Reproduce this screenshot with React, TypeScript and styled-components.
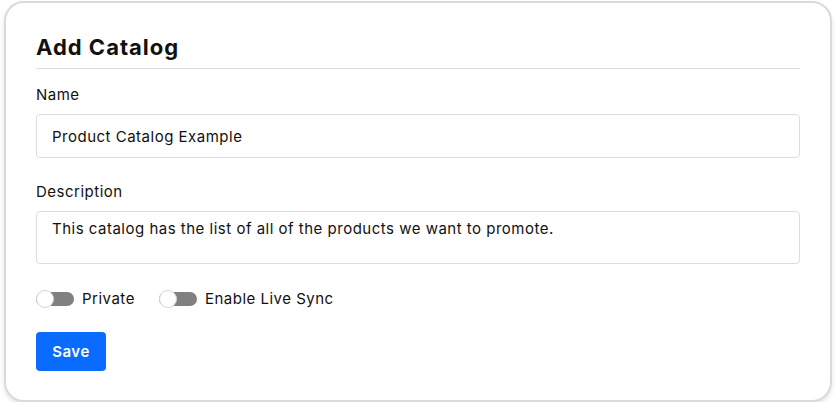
import { useState } from "react";
import styled, { createGlobalStyle } from "styled-components";

const GlobalStyle = createGlobalStyle`
  html, body {
    margin: 0;
    padding: 0;
    background: #ffffff;
  }
  body {
    padding: 1px 4px 0;
    font-family: Inter, "Liberation Sans", sans-serif;
    color: #111111;
  }
  * {
    box-sizing: border-box;
  }
`;

const Card = styled.form`
  width: 100%;
  height: 401px;
  border: 2px solid #dadada;
  border-radius: 20px;
  box-shadow: 0 3px 5px rgba(0, 0, 0, 0.1);
  padding: 30px 30px 0;
  display: flex;
  flex-direction: column;
  background: #fff;
`;

const Title = styled.h2`
  margin: 0;
  font-size: 22px;
  font-weight: 700;
  letter-spacing: 1px;
  line-height: 28px;
  padding-bottom: 7px;
  border-bottom: 1px solid #dddddd;
`;

const Field = styled.div<{ $gap: number }>`
  display: flex;
  flex-direction: column;
  margin-top: ${(p) => p.$gap}px;
`;

const Label = styled.label`
  font-size: 15px;
  letter-spacing: 0.5px;
  line-height: 20px;
  margin-bottom: 9px;
`;

const Input = styled.input`
  height: 44px;
  border: 1px solid #dddddd;
  border-radius: 4px;
  padding: 0 15px;
  font-family: inherit;
  font-size: 15px;
  letter-spacing: 0.5px;
  color: #111;
  outline: none;
`;

const TextArea = styled.textarea`
  height: 53px;
  border: 1px solid #dddddd;
  border-radius: 4px;
  padding: 7px 15px;
  font-family: inherit;
  font-size: 15px;
  letter-spacing: 0.5px;
  line-height: 20px;
  color: #111;
  resize: none;
  outline: none;
`;

const ToggleRow = styled.div`
  display: flex;
  align-items: center;
  gap: 24px;
  margin-top: 25px;
  height: 20px;
`;

const ToggleLabel = styled.label`
  display: flex;
  align-items: center;
  gap: 8px;
  font-size: 15px;
  letter-spacing: 0.5px;
  line-height: 20px;
  cursor: pointer;
`;

const Track = styled.span<{ $on: boolean }>`
  position: relative;
  width: 38px;
  height: 14px;
  border-radius: 7px;
  background: ${(p) => (p.$on ? "#0a6cff" : "#808080")};
`;

const Knob = styled.span<{ $on: boolean }>`
  position: absolute;
  top: -2px;
  left: ${(p) => (p.$on ? "20px" : "0")};
  width: 18px;
  height: 18px;
  border-radius: 50%;
  background: #fff;
  border: 1px solid #d6d6d6;
`;

const SaveButton = styled.button`
  align-self: flex-start;
  margin-top: 23px;
  width: 70px;
  height: 39px;
  border: none;
  border-radius: 4px;
  background: #0a6cff;
  color: #fff;
  font-family: inherit;
  font-size: 15px;
  letter-spacing: 0.5px;
  font-weight: 600;
  cursor: pointer;
`;

function Toggle({ label }: { label: string }) {
  const [on, setOn] = useState(false);
  return (
    <ToggleLabel onClick={() => setOn(!on)}>
      <Track $on={on}>
        <Knob $on={on} />
      </Track>
      {label}
    </ToggleLabel>
  );
}

export default function App() {
  return (
    <>
      <GlobalStyle />
      <Card onSubmit={(e) => e.preventDefault()}>
        <Title>Add Catalog</Title>
        <Field $gap={16}>
          <Label>Name</Label>
          <Input defaultValue="Product Catalog Example" />
        </Field>
        <Field $gap={24}>
          <Label>Description</Label>
          <TextArea defaultValue="This catalog has the list of all of the products we want to promote." />
        </Field>
        <ToggleRow>
          <Toggle label="Private" />
          <Toggle label="Enable Live Sync" />
        </ToggleRow>
        <SaveButton type="submit">Save</SaveButton>
      </Card>
    </>
  );
}
